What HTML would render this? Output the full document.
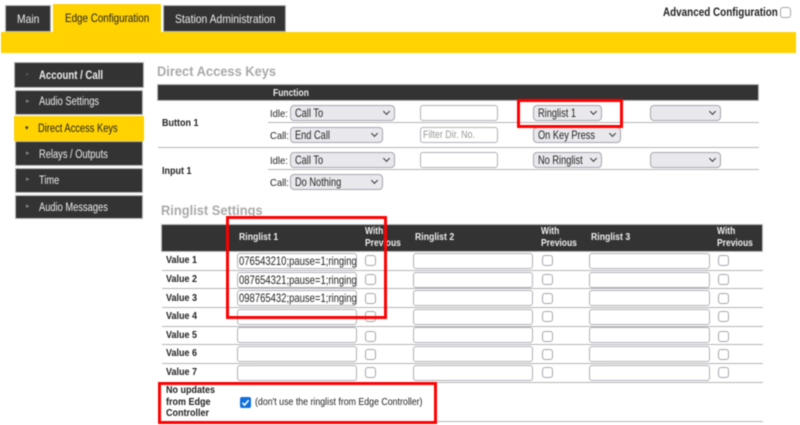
<!DOCTYPE html>
<html><head><meta charset="utf-8"><style>
html,body{margin:0;padding:0;background:#fff}
body{width:800px;height:425px;position:relative;overflow:hidden;font-family:"Liberation Sans",sans-serif;color:#222}
#w{position:absolute;left:0;top:0;width:800px;height:425px;filter:blur(.4px)}
#w div,#w span{position:absolute;box-sizing:border-box}
.t{white-space:nowrap;font-size:11px;line-height:14px;transform:scaleX(.9);transform-origin:left center}
.b{font-weight:bold}
.d{background:#333;outline:1px solid #bbb;outline-offset:-1px}
.y{background:#ffd200}
.w{color:#eee}
.h{color:#a9a9a9;font-weight:bold;font-size:14px;line-height:16px;transform:scaleX(.92);transform-origin:left center;white-space:nowrap}
.s{background:#e9e9ed;border:1.5px solid #a5a5ad;border-radius:4px;font-size:12px;line-height:14px;padding:0 0 0 4px;color:#222;white-space:nowrap;height:16px}
.s i{font-style:normal;display:inline-block;transform:scaleX(.77);transform-origin:left center}
.s:after{content:"";position:absolute;right:5px;top:3px;width:4px;height:4px;border-right:1.4px solid #333;border-bottom:1.4px solid #333;transform:rotate(45deg)}
.i{background:#fff;border:1.5px solid #b0b0b8;border-radius:3px;height:16px;overflow:hidden;white-space:nowrap}
.v{transform:scaleX(.79);font-size:12px;left:1px;top:0;line-height:14px}
.c{width:11px;height:11px;background:#fff;border:1.2px solid #a5a5ad;border-radius:3px}
.l{height:1px;background:#b5b5b5}
.r{border:3.5px solid #f00}
.a{color:#888;font-size:7px;line-height:8px}
.sb{font-size:11.5px;transform:scaleX(.81)}
.wp{font-size:10px;line-height:12px;transform:scaleX(.85)}
.rl{font-size:10px;transform:scaleX(.87)}
.vl{left:166px;font-size:10px}
</style></head><body><div id="w">

<div class="d" style="left:5px;top:5px;width:46px;height:27px"></div>
<span class="t w" style="left:17px;top:12px;font-size:12px;transform:scaleX(.86)">Main</span>
<div class="y" style="left:53px;top:4px;width:108px;height:28px"></div>
<span class="t" style="left:65px;top:11px;font-size:12px;transform:scaleX(.82)">Edge Configuration</span>
<div class="d" style="left:163px;top:5px;width:123px;height:27px"></div>
<span class="t w" style="left:175px;top:12px;font-size:12px;transform:scaleX(.865)">Station Administration</span>
<div class="y" style="left:1px;top:32px;width:795px;height:21px"></div>
<span class="t b" style="left:663px;top:6px;font-size:11.5px;transform:scaleX(.86)">Advanced Configuration</span>
<div class="c" style="left:780px;top:7px"></div>

<div class="d" style="left:14px;top:62px;width:130px;height:26px"></div>
<span class="t w b" style="left:39px;top:69px;font-size:11.5px;transform:scaleX(.835)">Account / Call</span>
<div class="d" style="left:15px;top:90px;width:128px;height:25px"></div>
<span class="t w sb" style="left:39px;top:95px">Audio Settings</span>
<div class="y" style="left:14px;top:116px;width:130px;height:25px"></div>
<span class="t sb" style="left:38px;top:122px">Direct Access Keys</span>
<div class="d" style="left:15px;top:141px;width:128px;height:25px"></div>
<span class="t w sb" style="left:39px;top:148px">Relays / Outputs</span>
<div class="d" style="left:15px;top:168px;width:128px;height:25px"></div>
<span class="t w sb" style="left:39px;top:174px">Time</span>
<div class="d" style="left:15px;top:195px;width:128px;height:24px"></div>
<span class="t w sb" style="left:39px;top:201px">Audio Messages</span>
<span class="a" style="left:26px;top:71px;color:#555">▸</span>
<span class="a" style="left:26px;top:98px">▸</span>
<span class="a" style="left:25px;top:125px;color:#333">▾</span>
<span class="a" style="left:26px;top:150px">▸</span>
<span class="a" style="left:26px;top:176px">▸</span>
<span class="a" style="left:26px;top:203px">▸</span>

<span class="h" style="left:157px;top:63px">Direct Access Keys</span>
<div class="d" style="left:157px;top:84px;width:602px;height:17px"></div>
<span class="t w b" style="left:273px;top:87px;font-size:10px;transform:scaleX(.85)">Function</span>
<span class="t b" style="left:162px;top:117px;font-size:10px">Button 1</span>
<span class="t" style="left:270px;top:107px;font-size:10.5px">Idle:</span>
<span class="t" style="left:270px;top:129px;font-size:10.5px">Call:</span>
<div class="s" style="left:290px;top:105px;width:105px"><i>Call To</i></div>
<div class="s" style="left:290px;top:127px;width:93px"><i>End Call</i></div>
<div class="i" style="left:420px;top:105px;width:78px"></div>
<div class="i" style="left:420px;top:127px;width:78px"><span class="t" style="left:2px;top:0;font-size:11px;color:#999;transform:scaleX(.81)">Filter Dir. No.</span></div>
<div class="s" style="left:533px;top:105px;width:69px"><i>Ringlist 1</i></div>
<div class="s" style="left:533px;top:127px;width:88px"><i>On Key Press</i></div>
<div class="s" style="left:650px;top:105px;width:71px"></div>
<div class="l" style="left:268px;top:122px;width:491px"></div>
<div class="l" style="left:158px;top:147px;width:601px"></div>

<span class="t b" style="left:162px;top:165px;font-size:10px">Input 1</span>
<span class="t" style="left:270px;top:154px;font-size:10.5px">Idle:</span>
<span class="t" style="left:270px;top:176px;font-size:10.5px">Call:</span>
<div class="s" style="left:290px;top:152px;width:105px"><i>Call To</i></div>
<div class="s" style="left:290px;top:174px;width:93px"><i>Do Nothing</i></div>
<div class="i" style="left:420px;top:152px;width:78px"></div>
<div class="s" style="left:533px;top:152px;width:69px"><i>No Ringlist</i></div>
<div class="s" style="left:650px;top:152px;width:71px"></div>
<div class="l" style="left:268px;top:169px;width:491px"></div>

<span class="h" style="left:161px;top:202px">Ringlist Settings</span>
<div class="d" style="left:161px;top:224px;width:602px;height:28px"></div>
<span class="t w b rl" style="left:239px;top:231px">Ringlist 1</span>
<span class="t w b wp" style="left:365px;top:226px">With<br>Previous</span>
<span class="t w b rl" style="left:415px;top:231px">Ringlist 2</span>
<span class="t w b wp" style="left:541px;top:226px">With<br>Previous</span>
<span class="t w b rl" style="left:591px;top:231px">Ringlist 3</span>
<span class="t w b wp" style="left:717px;top:226px">With<br>Previous</span>

<span class="t b vl" style="top:254px">Value 1</span>
<span class="t b vl" style="top:273px">Value 2</span>
<span class="t b vl" style="top:292px">Value 3</span>
<span class="t b vl" style="top:310px">Value 4</span>
<span class="t b vl" style="top:329px">Value 5</span>
<span class="t b vl" style="top:347px">Value 6</span>
<span class="t b vl" style="top:366px">Value 7</span>

<div class="l" style="left:162px;top:270px;width:601px"></div>
<div class="l" style="left:162px;top:288px;width:601px"></div>
<div class="l" style="left:162px;top:307px;width:601px"></div>
<div class="l" style="left:162px;top:326px;width:601px"></div>
<div class="l" style="left:162px;top:344px;width:601px"></div>
<div class="l" style="left:162px;top:363px;width:601px"></div>
<div class="l" style="left:162px;top:382px;width:601px"></div>
<div class="l" style="left:437px;top:421px;width:326px"></div>

<div class="i" style="left:237px;top:253px;width:120px"><span class="t v">076543210;pause=1;ringing</span></div>
<div class="i" style="left:237px;top:272px;width:120px"><span class="t v">087654321;pause=1;ringing</span></div>
<div class="i" style="left:237px;top:290px;width:120px"><span class="t v">098765432;pause=1;ringing</span></div>
<div class="i" style="left:237px;top:309px;width:120px"></div>
<div class="i" style="left:237px;top:327px;width:120px"></div>
<div class="i" style="left:237px;top:346px;width:120px"></div>
<div class="i" style="left:237px;top:365px;width:120px"></div>

<div class="i" style="left:413px;top:253px;width:120px"></div>
<div class="i" style="left:413px;top:272px;width:120px"></div>
<div class="i" style="left:413px;top:290px;width:120px"></div>
<div class="i" style="left:413px;top:309px;width:120px"></div>
<div class="i" style="left:413px;top:327px;width:120px"></div>
<div class="i" style="left:413px;top:346px;width:120px"></div>
<div class="i" style="left:413px;top:365px;width:120px"></div>

<div class="i" style="left:589px;top:253px;width:121px"></div>
<div class="i" style="left:589px;top:272px;width:121px"></div>
<div class="i" style="left:589px;top:290px;width:121px"></div>
<div class="i" style="left:589px;top:309px;width:121px"></div>
<div class="i" style="left:589px;top:327px;width:121px"></div>
<div class="i" style="left:589px;top:346px;width:121px"></div>
<div class="i" style="left:589px;top:365px;width:121px"></div>

<div class="c" style="left:365px;top:255px"></div><div class="c" style="left:365px;top:274px"></div><div class="c" style="left:365px;top:293px"></div><div class="c" style="left:365px;top:311px"></div><div class="c" style="left:365px;top:331px"></div><div class="c" style="left:365px;top:349px"></div><div class="c" style="left:365px;top:367px"></div>
<div class="c" style="left:542px;top:255px"></div><div class="c" style="left:542px;top:274px"></div><div class="c" style="left:542px;top:293px"></div><div class="c" style="left:542px;top:311px"></div><div class="c" style="left:542px;top:331px"></div><div class="c" style="left:542px;top:349px"></div><div class="c" style="left:542px;top:367px"></div>
<div class="c" style="left:718px;top:255px"></div><div class="c" style="left:718px;top:274px"></div><div class="c" style="left:718px;top:293px"></div><div class="c" style="left:718px;top:311px"></div><div class="c" style="left:718px;top:331px"></div><div class="c" style="left:718px;top:349px"></div><div class="c" style="left:718px;top:367px"></div>

<span class="t b" style="left:166px;top:385px;font-size:10px;line-height:11.6px">No updates<br>from Edge<br>Controller</span>
<svg style="position:absolute;left:240px;top:397px" width="11" height="11" viewBox="0 0 11 11"><rect width="11" height="11" rx="2" fill="#0f6fdc"/><path d="M2.5 5.8 L4.6 8 L8.6 3.2" fill="none" stroke="#fff" stroke-width="1.6"/></svg>
<span class="t" style="left:255px;top:396px;font-size:10px;transform:scaleX(.88)">(don't use the ringlist from Edge Controller)</span>

<div class="r" style="left:517px;top:99px;width:106px;height:29px"></div>
<div class="r" style="left:226px;top:216px;width:161px;height:103px"></div>
<div class="r" style="left:158px;top:382px;width:279px;height:42px"></div>
</div></body></html>
